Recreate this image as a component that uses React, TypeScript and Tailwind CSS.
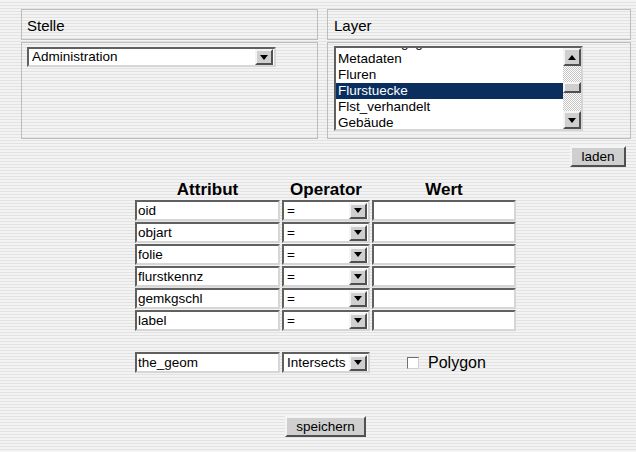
import React from "react";

/** Eingefärbter Hintergrund mit feinen Streifen */
const stripes =
    "bg-[repeating-linear-gradient(to_bottom,#f3f3f3_0px,#f3f3f3_2px,#e2e2e2_2px,#e2e2e2_3px)]";

const inset =
    "border-2 border-t-[#606060] border-l-[#606060] border-b-[#d6d6d6] border-r-[#d6d6d6] bg-white";

const raised =
    "border-2 border-t-[#f4f4f4] border-l-[#f4f4f4] border-b-[#505050] border-r-[#505050] bg-[#cfcfcf]";

function Arrow({ up }: { up?: boolean }) {
    return (
        <svg width="8" height="5" viewBox="0 0 8 5">
            {up ? <path d="M0 5 L4 0 L8 5 Z" fill="#000" /> : <path d="M0 0 L8 0 L4 5 Z" fill="#000" />}
        </svg>
    );
}

type SelectProps = {
    value: string;
    width: string;
    height: string;
};

function Select({ value, width, height }: SelectProps) {
    return (
        <div className={`${inset} ${width} ${height} flex items-center pl-[3px] pr-[1px]`}>
            <span className="flex-1 text-[13.5px] leading-none truncate">{value}</span>
            <div className={`${raised} w-[18px] h-[16px] flex items-center justify-center`}>
                <Arrow />
            </div>
        </div>
    );
}

const layers = ["Gemarkungsgrenzen", "Metadaten", "Fluren", "Flurstuecke", "Flst_verhandelt", "Gebäude"];

function LayerList() {
    return (
        <div className={`${inset} w-[249px] h-[85px] flex`}>
            <div className="flex-1 overflow-hidden">
                <div className="-mt-[13px]">
                    {layers.map((l) => (
                        <div
                            key={l}
                            className={`h-[16px] leading-[15px] text-[13.5px] pl-[2px] ${l === "Flurstuecke" ? "bg-[#0a2f5e] text-white" : ""}`}
                        >
                            {l}
                        </div>
                    ))}
                </div>
            </div>
            <div className="w-[18px] flex flex-col bg-[repeating-conic-gradient(#c4c4c4_0_25%,#ffffff_0_50%)] bg-[length:2px_2px]">
                <div className={`${raised} h-[18px] flex items-center justify-center`}>
                    <Arrow up />
                </div>
                <div className="h-[16px]" />
                <div className={`${raised} h-[11px]`} />
                <div className="flex-1" />
                <div className={`${raised} h-[18px] flex items-center justify-center`}>
                    <Arrow />
                </div>
            </div>
        </div>
    );
}

const attributes = ["oid", "objart", "folie", "flurstkennz", "gemkgschl", "label"];

function AttributeRow({ name }: { name: string }) {
    return (
        <div className="flex gap-[2px]">
            <div className={`${inset} w-[145px] h-[21px] text-[13.5px] leading-[17px] pl-[1px]`}>{name}</div>
            <Select value="=" width="w-[88px]" height="h-[21px]" />
            <div className={`${inset} w-[144px] h-[21px]`} />
        </div>
    );
}

function Button({ label, width }: { label: string; width: string }) {
    return (
        <button className={`${raised} ${width} h-[21px] text-[13.5px] leading-none`}>
            {label}
        </button>
    );
}

export default function App() {
    return (
        <div
            className={`${stripes} w-[636px] h-[452px] overflow-hidden text-black font-['Liberation_Sans',Arial,sans-serif]`}
        >
            <div className="pt-[9px] pl-[21px] flex gap-[9px]">
                <div className="w-[297px] flex flex-col gap-[2px]">
                    <div className="h-[31px] border border-[#bdbdbd] pl-[5px] pt-[8px] text-[15px] leading-none">
                        Stelle
                    </div>
                    <div className="h-[97px] border border-[#bdbdbd] pl-[5px] pt-[4px]">
                        <Select value="Administration" width="w-[249px]" height="h-[20px]" />
                    </div>
                </div>
                <div className="w-[304px] flex flex-col gap-[2px]">
                    <div className="h-[31px] border border-[#bdbdbd] pl-[6px] pt-[8px] text-[15px] leading-none">
                        Layer
                    </div>
                    <div className="h-[97px] border border-[#bdbdbd] pl-[6px] pt-[3px]">
                        <LayerList />
                    </div>
                </div>
            </div>

            <div className="flex justify-end pr-[10px] mt-[7px]">
                <Button label="laden" width="w-[56px]" />
            </div>

            <div className="ml-[135px] mt-[13px] flex flex-col gap-[1px]">
                <div className="flex gap-[2px] h-[19px] text-[17px] font-bold leading-none items-center">
                    <div className="w-[145px] text-center">Attribut</div>
                    <div className="w-[88px] text-center">Operator</div>
                    <div className="w-[144px] text-center">Wert</div>
                </div>
                {attributes.map((a) => (
                    <AttributeRow key={a} name={a} />
                ))}
            </div>

            <div className="ml-[135px] mt-[21px] flex items-center">
                <div className={`${inset} w-[145px] h-[21px] text-[13.5px] leading-[17px] pl-[1px]`}>the_geom</div>
                <div className="ml-[2px]">
                    <Select value="Intersects" width="w-[88px]" height="h-[21px]" />
                </div>
                <div className="ml-[37px] w-[12px] h-[12px] border border-t-[#707070] border-l-[#707070] border-b-[#d0d0d0] border-r-[#d0d0d0] bg-white" />
                <span className="ml-[9px] text-[16px] leading-none">Polygon</span>
            </div>

            <div className="ml-[285px] mt-[41px]">
                <Button label="speichern" width="w-[81px]" />
            </div>
        </div>
    );
}
